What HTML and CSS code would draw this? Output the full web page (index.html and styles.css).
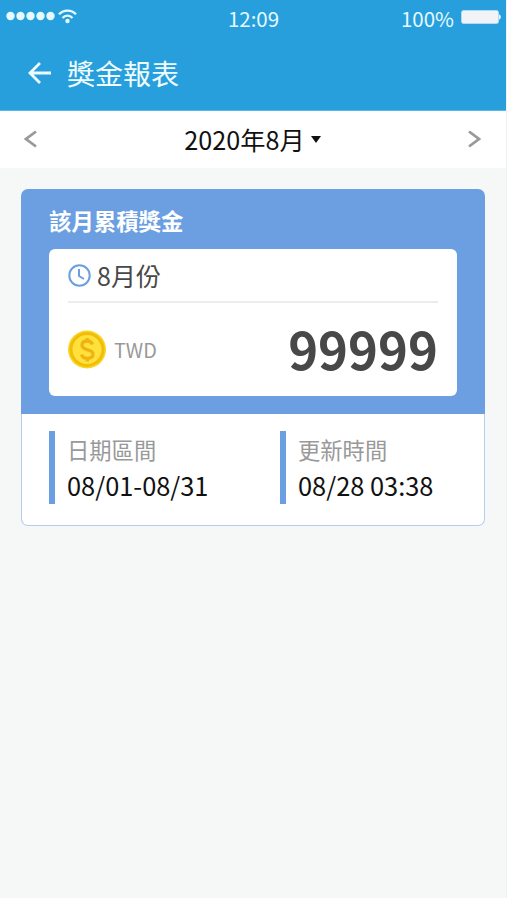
FILE: index.html
```html
<!DOCTYPE html>
<html lang="zh-Hant">
<head>
    <meta charset="UTF-8">
    <meta name="viewport" content="width=device-width, initial-scale=1.0">
    <title>獎金報表</title>
    <link rel="stylesheet" href="styles.css">
</head>

<body>
    <div class="app">
        <header class="header">
            <div class="status-bar">
                <div class="signal">
                    <svg width="72" height="18" viewBox="0 0 72 18">
                        <g fill="#e5faff">
                            <circle cx="4.500" cy="9" r="4.200"/>
                            <circle cx="14.500" cy="9" r="4.200"/>
                            <circle cx="24.500" cy="9" r="4.200"/>
                            <circle cx="34.500" cy="9" r="4.200"/>
                            <circle cx="44.500" cy="9" r="4.200"/>
                            <circle cx="61.500" cy="14" r="2.200"/>
                        </g>
                        <path d="M53 7.300c4.600-5 12.400-5 17 0M56.500 10.900c2.700-3 7.300-3 10 0" fill="none" stroke="#e5faff" stroke-width="2.200"/>
                    </svg>
                </div>
                <span class="time">12:09</span>
                <div class="battery">
                    <span>100%</span>
                    <svg width="40" height="14" viewBox="0 0 40 14">
                        <rect x="0.5" y="0.5" width="37" height="13" rx="2" fill="#f1f3f7" stroke="#a9dcf5"/>
                        <path d="M38 4.500c2.500 .5 2.500 4.500 0 5z" fill="#e5faff"/>
                    </svg>
                </div>
            </div>
            <div class="title-bar">
                <svg class="back" width="24" height="22" viewBox="0 0 24 22">
                    <path d="M23 11H2M12 1L2 11l10 10" fill="none" stroke="#effcff" stroke-width="2.800"/>
                </svg>
                <h1>獎金報表</h1>
            </div>
        </header>

        <nav class="month-nav">
            <svg width="13" height="18" viewBox="0 0 13 18">
                <path d="M12 1.500L2 9l10 7.500" fill="none" stroke="#999" stroke-width="2.800"/>
            </svg>
            <div class="month">
                <span>2020年8月</span>
                <svg width="10" height="7" viewBox="0 0 10 7">
                    <path d="M0 0h10L5 7z" fill="#111"/>
                </svg>
            </div>
            <svg width="13" height="18" viewBox="0 0 13 18">
                <path d="M1 1.500L11 9 1 16.500" fill="none" stroke="#999" stroke-width="2.800"/>
            </svg>
        </nav>

        <main>
            <section class="card">
                <div class="card-top">
                    <h2>該月累積獎金</h2>
                    <div class="panel">
                        <div class="panel-month">
                            <svg width="23" height="23" viewBox="0 0 23 23">
                                <circle cx="11.500" cy="11.500" r="10.200" fill="none" stroke="#6b9fe0" stroke-width="2"/>
                                <path d="M11 5v7l5 3" fill="none" stroke="#6b9fe0" stroke-width="2"/>
                            </svg>
                            <span>8月份</span>
                        </div>
                        <div class="amount-row">
                            <svg width="38" height="39" viewBox="0 0 38 39">
                                <circle cx="19" cy="19.500" r="19" fill="#fbd61e"/>
                                <circle cx="19" cy="19.500" r="16" fill="#fee13a" stroke="#f1bd0b" stroke-width="3"/>
                                <path d="M24.500 14.500c-.8-2.500-2.700-3.500-5.300-3.500-3.200 0-5.200 1.700-5.200 4.300 0 6 11 3 11 8.700 0 2.700-2.300 4.300-5.700 4.300-3.200 0-5-1.300-5.800-3.800M19.300 8v3.500M19.300 28v3.500" fill="none" stroke="#efb414" stroke-width="3.300"/>
                            </svg>
                            <span class="currency">TWD</span>
                            <span class="amount">99999</span>
                        </div>
                    </div>
                </div>
                <div class="card-bottom">
                    <div class="info">
                        <p class="label">日期區間</p>
                        <p class="value">08/01-08/31</p>
                    </div>
                    <div class="info">
                        <p class="label">更新時間</p>
                        <p class="value">08/28 03:38</p>
                    </div>
                </div>
            </section>
        </main>
    </div>
</body>

</html>
```
FILE: styles.css
```css
* {
    box-sizing: border-box;
    margin: 0;
    padding: 0;
}

body {
    background-color: #fff;
    font-family: "Noto Sans CJK TC", sans-serif;
}

svg {
    display: block;
    flex-shrink: 0;
}

.app {
    width: 506px;
    height: 898px;
    background-color: #f6f8f8;
    box-shadow: 1px 0 #eef2f4;
}

/* header */
.header {
    height: 111px;
    background-color: #289fdd;
    border-bottom: 1px solid #5cb8e6;
    color: #e5faff;
}

.status-bar {
    display: grid;
    grid-template-columns: 1fr auto 1fr;
    align-items: center;
    height: 35px;
    padding: 0 5px 0 6px;
    font-size: 20.5px;
}

.signal {
    margin-top: -3px;
}

.battery {
    display: flex;
    justify-content: flex-end;
    align-items: center;
    gap: 7px;
}

.battery svg {
    margin-top: -1px;
}

.title-bar {
    display: flex;
    align-items: center;
    gap: 16px;
    height: 76px;
    padding-left: 28px;
}

.title-bar h1 {
    margin-left: -1px;
    font-size: 28px;
    font-weight: 400;
    line-height: 40px;
    color: #effcff;
}

/* month switcher */
.month-nav {
    display: flex;
    justify-content: space-between;
    align-items: center;
    height: 57px;
    padding: 0 25px 1px 24px;
    background-color: #fff;
}

.month {
    display: flex;
    align-items: center;
    gap: 6px;
    font-size: 25.2px;
    color: #111;
}

/* card */
.card {
    width: 464px;
    height: 337px;
    margin: 21px 0 0 21px;
}

.card-top {
    height: 225px;
    padding: 15px 28px 0;
    border-radius: 7px 7px 0 0;
    background-color: #6b9fe2;
}

.card-top h2 {
    font-size: 22.4px;
    line-height: 32px;
    color: #fff;
}

.panel {
    height: 147px;
    margin-top: 13px;
    padding: 0 19px;
    border-radius: 6px;
    background-color: #fff;
}

.panel-month {
    display: flex;
    align-items: center;
    gap: 6px;
    height: 54px;
    border-bottom: 2px solid #ebeced;
    font-size: 25px;
    color: #484848;
}

.amount-row {
    display: flex;
    align-items: center;
    height: 92px;
}

.currency {
    margin-left: 8px;
    font-size: 19.8px;
    color: #999;
}

.amount {
    margin: -2px 0 0 auto;
    font-size: 50.8px;
    font-weight: 700;
    line-height: 60px;
    color: #484848;
}

.card-bottom {
    display: grid;
    grid-template-columns: 231px 1fr;
    height: 112px;
    padding: 17px 0 0 27px;
    border: 1px solid #b5cdec;
    border-top: 0;
    border-radius: 0 0 7px 7px;
    background-color: #fff;
}

.info {
    height: 73px;
    padding-left: 12px;
    border-left: 6px solid #6b9fe2;
}

.label {
    font-size: 22.3px;
    line-height: 37px;
    color: #999;
}

.value {
    font-size: 25.4px;
    line-height: 35px;
    color: #111;
}
```
